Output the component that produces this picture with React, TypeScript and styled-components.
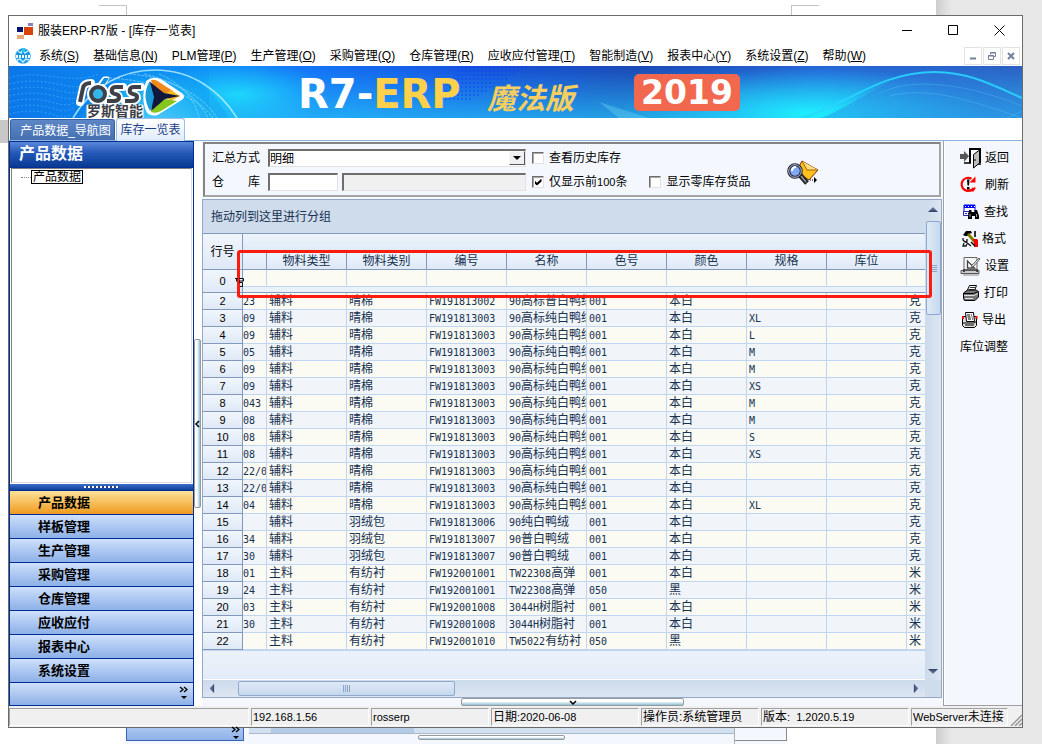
import React from "react";
import styled, { createGlobalStyle, css } from "styled-components";

const sans = `"Liberation Sans", "Noto Sans CJK SC", sans-serif`;

const GlobalStyle = createGlobalStyle`
  *, *::before, *::after { box-sizing: border-box; }
  body { margin: 0; font: 12px/16px ${sans}; color: #000; background: #fff; }
  button, input, select { font: inherit; color: inherit; margin: 0; }
  button { padding: 0; border: 0; background: none; cursor: pointer; }
`;

/* ---------- desktop ---------- */

const Desktop = styled.div`
  min-height: 100vh;
  display: grid;
  grid-template-columns: 8px minmax(0, 1fr) 19px;
  grid-template-rows: 15px 1fr 16px;
  overflow: hidden;
  background: linear-gradient(to left, #e8e8e8 90px, #cdcdcd 106px, #fff 106px);
`;

const PageMarks = styled.div`
  grid-column: 2;
  display: flex;
  justify-content: space-between;
  align-items: flex-end;
  padding: 0 204px 0 91px;
`;

const Mark = styled.span<{ $side: "left" | "right" }>`
  width: 28px;
  height: 10px;
  border-top: 1px solid #c4c4c4;
  ${(p) => (p.$side === "left" ? "border-right" : "border-left")}: 1px solid #c4c4c4;
`;

const Gutter = styled.div`
  grid-column: 1;
  padding-top: 105px;
  &::before { content: ""; display: block; height: 23px; background: #c8c8c8; }
`;

const Under = styled.div`
  grid-column: 2;
  display: flex;
  margin-left: 118px;
  width: 662px;
  border-right: 1px solid #fff;
  background: #f4f8fe;
`;

const UnderSide = styled.div`
  width: 118px;
  height: 13px;
  border: solid #3a62b4;
  border-width: 0 1px 1px;
  background: linear-gradient(#a9c6f2, #8fb1e6);
  display: flex;
  justify-content: flex-end;
  align-items: flex-end;
  padding-right: 3px;
`;

const UnderMain = styled.div`
  flex: 1;
  margin-left: 5px;
  display: flex;
  flex-direction: column;
  align-items: center;
  gap: 1px;
  border-right: 1px solid #b0b0b0;
`;

const UnderScroll = styled.div`
  width: 100%;
  height: 6px;
  border-bottom: 1px solid #a8b9d0;
  background: linear-gradient(90deg, #d3e0f0 22px, #b4cbe6 22px 165px, #d3e0f0 165px);
`;

const UnderRest = styled.div`
  width: 52px;
  height: 13px;
  border: solid #8a8a8a;
  border-width: 0 1px 1px 0;
`;

/* ---------- window frame ---------- */

const Frame = styled.div`
  grid-column: 2;
  display: flex;
  flex-direction: column;
  min-width: 0;
  border: 1px solid #6b6b6b;
  background: #fff;
`;

const TitleBar = styled.header`
  height: 29px;
  display: flex;
  align-items: center;
  padding: 0 0 0 8px;
  gap: 5px;
`;

const Title = styled.h1`
  flex: 1;
  margin: 0;
  font: 400 12px/16px ${sans};
`;

const WindowButtons = styled.div`
  display: flex;
`;

const WindowButton = styled.button`
  width: 46px;
  height: 28px;
  display: grid;
  place-items: center;
`;

const MenuBar = styled.nav`
  height: 21px;
  display: flex;
  align-items: center;
  padding: 0 2px 0 5px;
`;

const MenuItem = styled.button`
  margin-left: 7px;
  margin-right: 7px;
  white-space: nowrap;
`;

const MdiButtons = styled.div`
  margin-left: auto;
  display: flex;
  gap: 1px;
`;

const MdiButton = styled.button`
  width: 18px;
  height: 18px;
  border: 1px solid #e2e2e2;
  display: grid;
  place-items: center;
`;

/* ---------- banner ---------- */

const Banner = styled.div`
  position: relative;
  height: 52px;
  display: flex;
  align-items: center;
  overflow: hidden;
  padding-left: 60px;
`;

const BannerArt = styled.svg`
  position: absolute;
  inset: 0;
  width: 100%;
  height: 100%;
`;

const Logo = styled.svg`
  position: relative;
  flex: none;
`;

const Brand = styled.span`
  position: relative;
  margin-left: 101px;
  width: 189px;
  flex: none;
  font: 700 40px/48px "DejaVu Sans", sans-serif;
  color: #fff;
  padding-top: 4px;
  white-space: nowrap;
  b { color: #ffd04c; }
`;

const Edition = styled.span`
  position: relative;
  flex: none;
  width: 147px;
  font: italic 700 29px/44px "Noto Sans CJK SC", sans-serif;
  color: #f8cf5e;
  padding-top: 8px;
  white-space: nowrap;
`;

const Year = styled.span`
  position: relative;
  width: 106px;
  height: 37px;
  border-radius: 5px;
  background: #f2684f;
  color: #fff;
  text-align: center;
  font: 700 33px/38px "DejaVu Sans", sans-serif;
`;

/* ---------- document tabs ---------- */

const Tabs = styled.div`
  height: 23px;
  display: flex;
  align-items: flex-end;
  padding-left: 1px;
  border-bottom: 1px solid #8fb2de;
`;

const Tab = styled.button<{ $active?: boolean }>`
  border-radius: 3px 3px 0 0;
  white-space: nowrap;
  ${(p) =>
    p.$active
      ? css`
          width: 69px;
          height: 23px;
          margin-left: 1px;
          margin-bottom: -1px;
          border: 1px solid #9cbfe9;
          border-bottom: 0;
          background: linear-gradient(#fff, #dfebfb);
          color: #1b3f86;
        `
      : css`
          width: 105px;
          height: 21px;
          padding: 2px 0 0 6px;
          border: 1px solid #38609f;
          border-bottom: 0;
          background: linear-gradient(#5c86c6, #4470b2);
          color: #fff;
        `}
`;

const Body = styled.div`
  flex: 1;
  display: flex;
  min-height: 0;
`;

/* ---------- sidebar ---------- */

const Sidebar = styled.aside`
  width: 185px;
  flex: none;
  display: flex;
  flex-direction: column;
  border: 1px solid #002d96;
`;

const SideTitle = styled.h2`
  margin: 0;
  height: 26px;
  padding: 0 9px;
  font: 700 16px/24px ${sans};
  color: #fff;
  background: linear-gradient(#5a88d8, #2458b8 45%, #083a92);
  border-bottom: 1px solid #002d96;
`;

const Tree = styled.div`
  flex: 1;
  margin: 0 1px 1px;
  padding: 1px 0 0 9px;
  border: 1px solid #808080;
  border-right-color: #ddd;
  border-bottom-color: #ddd;
  display: flex;
  align-items: flex-start;
`;

const TreeStem = styled.span`
  width: 10px;
  margin-top: 7px;
  border-top: 1px dotted #888;
`;

const TreeNode = styled.button`
  height: 14px;
  padding: 0 1px;
  border: 1px solid #000;
  line-height: 12px;
`;

const Splitter = styled.div`
  height: 7px;
  display: flex;
  justify-content: center;
  background: linear-gradient(#3d6fc8, #0c3f9b);
  border-bottom: 1px solid #002d96;
  &::before {
    content: "";
    margin-top: 2px;
    width: 35px;
    height: 2px;
    background: repeating-linear-gradient(90deg, #fff 0 2px, #24427c 2px 4px);
  }
`;

const SideItem = styled.button<{ $active?: boolean }>`
  height: 24px;
  padding-left: 28px;
  text-align: left;
  font: 700 13px/22px ${sans};
  border-bottom: 1px solid #002d96;
  background: ${(p) =>
    p.$active ? "linear-gradient(#fbe19a, #f6bb55 55%, #ee9a1f)" : "linear-gradient(#cfe0fa, #adc8f2 50%, #8db0e6)"};
`;

const SideMore = styled.div`
  height: 22px;
  display: flex;
  justify-content: flex-end;
  padding: 3px 5px 0 0;
  background: linear-gradient(#cfe0fa, #8db0e6);
`;

const CollapseRail = styled.div`
  width: 8px;
  flex: none;
  display: flex;
  align-items: center;
`;

const CollapseThumb = styled.button`
  width: 7px;
  height: 169px;
  border: 1px solid #9a9a9a;
  border-radius: 2px;
  background: linear-gradient(90deg, #fff 40%, #8cc0d8);
  display: grid;
  place-items: center;
`;

/* ---------- main column ---------- */

const Main = styled.main`
  flex: 1;
  min-width: 0;
  display: flex;
  flex-direction: column;
  background: #f4f8fe;
`;

const Filters = styled.form`
  margin: 1px 2px 2px 1px;
  height: 55px;
  border: 2px solid #848484;
  border-right-color: #a5a5a5;
  border-bottom-color: #a5a5a5;
  padding: 5px 7px 0;
  display: flex;
`;

const FilterRows = styled.div`
  display: grid;
  grid-auto-rows: 18px;
  row-gap: 6px;
`;

const FilterRow = styled.div`
  display: flex;
  align-items: center;
  white-space: nowrap;
`;

const FieldLabel = styled.label`
  width: 48px;
  margin-right: 8px;
  display: flex;
  justify-content: space-between;
`;

const sunken = css`
  border: 2px solid #6e6e6e;
  border-right: 1px solid #e2e2e2;
  border-bottom: 1px solid #e2e2e2;
`;

const SelectBox = styled.div`
  position: relative;
  width: 258px;
  height: 18px;
`;

const Select = styled.select`
  appearance: none;
  display: block;
  width: 100%;
  height: 100%;
  padding: 0;
  border-radius: 0;
  background: #fff;
  line-height: 14px;
  ${sunken}
`;

const SelectArrow = styled.span`
  position: absolute;
  top: 2px;
  right: 1px;
  width: 16px;
  height: 14px;
  background: #f0f0f0;
  border: 1px solid #f8f8f8;
  border-right-color: #555;
  border-bottom-color: #555;
  pointer-events: none;
  display: grid;
  place-items: center;
  &::before {
    content: "";
    border: 4px solid transparent;
    border-top-color: #000;
    border-bottom: 0;
  }
`;

const TextInput = styled.input<{ $wide?: boolean }>`
  width: ${(p) => (p.$wide ? 184 : 70)}px;
  height: 18px;
  padding: 0 2px;
  margin-right: ${(p) => (p.$wide ? 0 : 4)}px;
  background: ${(p) => (p.$wide ? "#f0f0f0" : "#fff")};
  ${sunken}
`;

const Check = styled.label`
  display: flex;
  align-items: center;
  gap: 5px;
  margin-left: 6px;
  & + & { margin-left: 22px; }
`;

const CheckInput = styled.input`
  appearance: none;
  width: 12px;
  height: 12px;
  background: #fff;
  border: 1px solid #6e6e6e;
  border-right-color: #e2e2e2;
  border-bottom-color: #e2e2e2;
  box-shadow: inset 1px 1px #a8a8a8;
  display: grid;
  place-items: center;
  &:checked::after {
    content: "";
    width: 7px;
    height: 7px;
    background: #000;
    clip-path: polygon(0 28%, 36% 60%, 100% 0, 100% 42%, 36% 100%, 0 70%);
  }
`;

const SearchButton = styled.button`
  align-self: flex-start;
  margin: 11px 0 0 37px;
`;

/* ---------- data grid ---------- */

const GridBox = styled.section`
  flex: 1;
  min-height: 0;
  display: grid;
  grid-template-columns: minmax(0, 1fr) 16px;
  grid-template-rows: 1fr 17px;
  margin-right: 1px;
  border: 1px solid #94a8c6;
`;

const GridPane = styled.div`
  position: relative;
  display: flex;
  flex-direction: column;
  color: #16304f;
  border-bottom: 1px solid #fff;
  background: linear-gradient(#f1f5fc 90%, #eaf1fa 95%, #e2ecf8);
`;

const GroupBar = styled.div`
  height: 34px;
  padding: 0 8px;
  line-height: 35px;
  background: #cfdcec;
  border-bottom: 1px solid #8399bb;
`;

const Table = styled.table`
  width: 100%;
  table-layout: fixed;
  border-spacing: 0;
  border-bottom: 1px solid #bfd5f1;
`;

const cell = css`
  padding: 0;
  font-weight: 400;
  white-space: nowrap;
  overflow: hidden;
`;

const RowHead = styled.th<{ $h?: number }>`
  ${cell}
  height: ${(p) => p.$h ?? 17}px;
  color: #000;
  text-align: center;
  font-size: 11px;
  line-height: 14px;
  background: linear-gradient(#f0f6fd, #dfe9f6);
  border-right: 1px solid #8399bb;
  border-bottom: 1px solid #8399bb;
`;

const Corner = styled(RowHead)`
  font-size: 12px;
`;

const Band = styled.th`
  ${cell}
  height: 18px;
  background: linear-gradient(#edf4fc, #dfeaf7);
`;

const ColHead = styled.th`
  ${cell}
  height: 18px;
  line-height: 16px;
  text-align: center;
  background: linear-gradient(#edf4fc, #dfeaf7);
  border-right: 1px solid #8399bb;
  border-bottom: 1px solid #8399bb;
  &:last-child { border-right: 0; }
`;

const Row = styled.tr<{ $alt?: boolean }>`
  background: ${(p) => (p.$alt ? "#f1f5fa" : "#fbfbf3")};
`;

const Cell = styled.td`
  ${cell}
  height: 17px;
  padding-left: 2px;
  line-height: 14px;
  border-right: 1px solid #bfd5f1;
  border-bottom: 1px solid #bfd5f1;
  &:nth-child(2) { padding-left: 0; }
  &:last-child { border-right: 0; }
`;

const FilterGap = styled.td`
  ${cell}
  height: 6px;
  background: #e9f1fa;
  border-bottom: 1px solid #8399bb;
`;

const Ascii = styled.span`
  font-family: "DejaVu Sans Mono", monospace;
  font-size: 10px;
  line-height: 1;
`;

const Highlight = styled.div`
  position: absolute;
  top: 50px;
  left: 34px;
  right: -7px;
  height: 48px;
  border: 3px solid #fb1c10;
  border-radius: 3px;
  z-index: 1;
`;

const FilterMark = styled.svg`
  position: absolute;
  top: 78px;
  left: 32px;
  z-index: 2;
`;

const VScroll = styled.div`
  display: flex;
  flex-direction: column;
  align-items: center;
  padding: 7px 0 6px;
  background: linear-gradient(90deg, #ccdaea, #dce6f2);
`;

const VThumb = styled.div`
  width: 15px;
  height: 94px;
  margin: 9px 0 auto;
  border: 1px solid #8ea9cd;
  border-radius: 2px;
  background: linear-gradient(90deg, #dfe9f6, #c6d8ee);
  display: grid;
  place-items: center;
  &::before {
    content: "";
    width: 7px;
    height: 7px;
    background: repeating-linear-gradient(#8ba5c8 0 1px, transparent 1px 2px);
  }
`;

const HScroll = styled.div`
  display: flex;
  align-items: center;
  padding: 0 4px;
  background: linear-gradient(#ccdaea, #dce6f2);
`;

const HThumb = styled.div`
  width: 217px;
  height: 15px;
  margin: 0 auto 0 21px;
  border: 1px solid #8ea9cd;
  border-radius: 2px;
  background: linear-gradient(#dfe9f6, #c6d8ee);
  display: grid;
  place-items: center;
  &::before {
    content: "";
    width: 7px;
    height: 7px;
    background: repeating-linear-gradient(90deg, #8ba5c8 0 1px, transparent 1px 2px);
  }
`;

const ScrollCorner = styled.div`
  background: #cfdcec;
`;

const rotate = { up: 0, right: 90, down: 180, left: 270 };

const Arrow = styled.button<{ $dir: keyof typeof rotate }>`
  width: 10px;
  height: 5px;
  flex: none;
  background: linear-gradient(#7a88ac, #2f3f66);
  clip-path: polygon(50% 0, 100% 100%, 0 100%);
  transform: rotate(${(p) => rotate[p.$dir]}deg);
`;

const BottomRail = styled.div`
  height: 8px;
  display: flex;
  justify-content: center;
`;

const BottomThumb = styled.button<{ $small?: boolean }>`
  width: ${(p) => (p.$small ? 147 : 223)}px;
  height: ${(p) => (p.$small ? 5 : 8)}px;
  border: 1px solid #9a9a9a;
  border-radius: 2px;
  background: linear-gradient(#fff 40%, #8cc0d8);
  display: grid;
  place-items: center;
`;

/* ---------- right tool column ---------- */

const Tools = styled.aside`
  width: 79px;
  flex: none;
  display: flex;
  flex-direction: column;
  padding: 3px 0 0 16px;
  border-left: 1px solid #a0a0a0;
  border-bottom: 1px solid #a0a0a0;
  box-shadow: inset 1px 0 #fff;
  background: #f4f8fe;
`;

const Tool = styled.button`
  height: 27px;
  display: flex;
  align-items: center;
  gap: 4px;
  white-space: nowrap;
  svg { flex: none; }
`;

/* ---------- status bar ---------- */

const StatusBar = styled.footer`
  height: 21px;
  display: flex;
  gap: 2px;
  padding: 2px 0 1px;
  background: #f0f0f0;
`;

const Status = styled.span<{ $w?: number }>`
  ${(p) => (p.$w ? `width: ${p.$w}px; flex: none;` : "flex: 1;")}
  padding-left: 1px;
  border: 1px solid #a0a0a0;
  border-right-color: #fff;
  border-bottom-color: #fff;
  line-height: 17px;
  white-space: pre;
  overflow: hidden;
`;

const Small = styled.span`
  font-size: 11px;
`;

/* ---------- data ---------- */

const menus: [string, string][] = [
  ["系统", "S"], ["基础信息", "N"], ["PLM管理", "P"], ["生产管理", "O"], ["采购管理", "Q"], ["仓库管理", "R"],
  ["应收应付管理", "T"], ["智能制造", "V"], ["报表中心", "Y"], ["系统设置", "Z"], ["帮助", "W"],
];

const sections = ["产品数据", "样板管理", "生产管理", "采购管理", "仓库管理", "应收应付", "报表中心", "系统设置"];

const columns = ["", "物料类型", "物料类别", "编号", "名称", "色号", "颜色", "规格", "库位", ""];

const pure = "90高标纯白鸭绒";
const rows: string[][] = [
  ["23", "辅料", "晴棉", "FW191813002", "90高标普白鸭绒", "001", "本白", "", "", "克"],
  ["09", "辅料", "晴棉", "FW191813003", pure, "001", "本白", "XL", "", "克"],
  ["09", "辅料", "晴棉", "FW191813003", pure, "001", "本白", "L", "", "克"],
  ["05", "辅料", "晴棉", "FW191813003", pure, "001", "本白", "M", "", "克"],
  ["09", "辅料", "晴棉", "FW191813003", pure, "001", "本白", "M", "", "克"],
  ["09", "辅料", "晴棉", "FW191813003", pure, "001", "本白", "XS", "", "克"],
  ["043", "辅料", "晴棉", "FW191813003", pure, "001", "本白", "M", "", "克"],
  ["08", "辅料", "晴棉", "FW191813003", pure, "001", "本白", "M", "", "克"],
  ["08", "辅料", "晴棉", "FW191813003", pure, "001", "本白", "S", "", "克"],
  ["08", "辅料", "晴棉", "FW191813003", pure, "001", "本白", "XS", "", "克"],
  ["22/0", "辅料", "晴棉", "FW191813003", pure, "001", "本白", "", "", "克"],
  ["22/0", "辅料", "晴棉", "FW191813003", pure, "001", "本白", "", "", "克"],
  ["04", "辅料", "晴棉", "FW191813003", pure, "001", "本白", "XL", "", "克"],
  ["", "辅料", "羽绒包", "FW191813006", "90纯白鸭绒", "001", "本白", "", "", "克"],
  ["34", "辅料", "羽绒包", "FW191813007", "90普白鸭绒", "001", "本白", "", "", "克"],
  ["30", "辅料", "羽绒包", "FW191813007", "90普白鸭绒", "001", "本白", "", "", "克"],
  ["01", "主料", "有纺衬", "FW192001001", "TW22308高弹", "001", "本白", "", "", "米"],
  ["24", "主料", "有纺衬", "FW192001001", "TW22308高弹", "050", "黑", "", "", "米"],
  ["03", "主料", "有纺衬", "FW192001008", "3044H树脂衬", "001", "本白", "", "", "米"],
  ["30", "主料", "有纺衬", "FW192001008", "3044H树脂衬", "001", "本白", "", "", "米"],
  ["", "主料", "有纺衬", "FW192001010", "TW5022有纺衬", "050", "黑", "", "", "米"],
];

/* Latin runs are set in a narrower face than the Chinese around them. */
function Mixed({ text, as: As = Ascii }: { text: string; as?: React.ElementType }) {
  return (
    <>
      {text.split(/([ -~]+)/).map((part, i) => (i % 2 ? <As key={i}>{part}</As> : part))}
    </>
  );
}

/* ---------- icons ---------- */

const Glyph = ({ w = 20, h = 20, children }: { w?: number; h?: number; children: React.ReactNode }) => (
  <svg width={w} height={h} viewBox={`0 0 ${w} ${h}`} aria-hidden="true">{children}</svg>
);

const DoorIcon = () => (
  <Glyph w={21} h={22}>
    <path d="M0 7h4V4l5 5-5 6v-3H0z" fill="#555" />
    <path d="M10 16V2h10v14" fill="#fff" stroke="#000" strokeWidth="2" />
    <path d="M4 16h7M17 17h4" stroke="#000" strokeWidth="1.5" />
    <path d="M13.500 7.500l6-4.500v13l-6 5z" fill="#bdbdbd" stroke="#000" />
    <path d="M15 12v2" stroke="#000" />
  </Glyph>
);

const RefreshIcon = () => (
  <Glyph w={21}>
    <path d="M11.500 3.800A6.500 6.500 0 1 0 13.500 13" fill="none" stroke="#f00" strokeWidth="2.200" />
    <path d="M9.500 7.500h6v-6z" fill="#f00" />
    <path d="M9 15.500h4l2-3" fill="none" stroke="#f00" strokeWidth="2" />
    <path d="M7 4.500h2.500l-.5 6H7.500zM7 12h2.500v2.500H7z" fill="#000" />
  </Glyph>
);

const FindIcon = () => (
  <Glyph>
    <path d="M4 3h11v9H4z" fill="#fff" stroke="#00f" />
    <path d="M4 3h11v3H4z" fill="#00f" />
    <path d="M5 4.500h10" stroke="#fff" strokeDasharray="1 2" />
    <path d="M3.500 9.500h7v4h-7z" fill="#fff" stroke="#22b" />
    <path d="M5 11.500h5" stroke="#22b" strokeDasharray="2 1" />
    <path d="M9 8h2.500v2h3V8H17l2 6v3h-4v-3h-3v3H8v-3z" fill="#000" />
    <path d="M10 12v3M16.500 12v3" stroke="#ccc" strokeWidth=".8" />
  </Glyph>
);

const FormatIcon = () => (
  <Glyph w={18}>
    <path d="M3 6l3-4h5l1 2-3 1-1 2H5z" fill="#000" />
    <path d="M8 5l7 8" stroke="#808000" strokeWidth="3" />
    <path d="M14.500 2v6M15.500 2v6" stroke="#333" />
    <path d="M13 10h4l1 1v7h-4v-5z" fill="#f00" />
    <path d="M3 9v2l2 2 2-1v-2M6 13l5 4M4 14l-1 3h3l1-2" fill="none" stroke="#111" strokeWidth="1.300" />
    <path d="M11 13l4 4" stroke="#000" strokeWidth="1.500" />
  </Glyph>
);

const SetupIcon = () => (
  <Glyph w={21} h={20}>
    <path d="M4 1.500h13v12H4z" fill="#f5f5f5" stroke="#666" />
    <path d="M7.500 5v7h7z" fill="#fff" stroke="#444" strokeWidth="1.300" />
    <path d="M11 10l8-8 1 1-7 8z" fill="#ddd" stroke="#444" strokeWidth=".8" />
    <path d="M1 14.500h18v3H1z" fill="#ccc" stroke="#555" />
    <path d="M3 19h16" stroke="#888" />
    <path d="M4 13v3M17 13v3" stroke="#444" strokeWidth="2" />
  </Glyph>
);

const PrintIcon = () => (
  <Glyph>
    <path d="M7 8l2.500-5.500h7L14 9z" fill="#fff" stroke="#000" />
    <path d="M10 4.500h5M9 6.500h5" stroke="#000" strokeWidth=".8" />
    <path d="M3.500 10l4-3h9l2 2v5l-3.500 3.500H4.500l-1-2z" fill="#777" stroke="#000" />
    <path d="M3.500 10.500h10l5-2" fill="none" stroke="#000" />
    <path d="M4 12.500h10l4-2" fill="none" stroke="#ddd" />
    <path d="M5 15.500h8" stroke="#ddd" />
  </Glyph>
);

const ExportIcon = () => (
  <Glyph w={18}>
    <path d="M2.500 6.500h14v9l-2 2h-10l-2-2z" fill="#ddd" stroke="#000" />
    <path d="M5.500 2.500h8l1 9h-8z" fill="#fff" stroke="#000" />
    <path d="M7 5h5M7.500 7h5M8 9h5" stroke="#000" strokeDasharray="3 1" />
    <path d="M2 6h2v3H2zM15.500 6h2v3h-2z" fill="#f00" />
    <path d="M3 13h11l3-2M5 15h9" fill="none" stroke="#000" />
  </Glyph>
);

const SearchMailIcon = () => (
  <Glyph w={33} h={26}>
    <path d="M15 1l16 9-9 10-13-8z" fill="#ffc21c" stroke="#7c2c12" />
    <path d="M15 1l5 9 11 0" fill="#ffe27a" stroke="#a85a10" />
    <path d="M13 15l7 8" stroke="#222" strokeWidth="5" />
    <path d="M14 16l5 6" stroke="#999" strokeWidth="1.500" />
    <circle cx="8" cy="11" r="6.300" fill="#7fa9f5" stroke="#223" strokeWidth="3" />
    <circle cx="8" cy="11" r="6.300" fill="none" stroke="#b9c4dd" strokeWidth="1" />
    <path d="M5 11c0-3 2-4 4-4" stroke="#fff" strokeWidth="2" fill="none" />
    <path d="M23 20h5" stroke="#000" strokeDasharray="1 1" />
    <path d="M27 17l3 3-3 3z" fill="#000" />
  </Glyph>
);

const AppIcon = () => (
  <Glyph w={16} h={16}>
    <path d="M0 4h6v5H0z" fill="#04146c" />
    <path d="M11 0h5v3h-5z" fill="#8a80bc" />
    <path d="M7 4h9v8H7z" fill="#d84408" />
    <path d="M0 12h7v4H0z" fill="#eaa878" />
  </Glyph>
);

const GlobeIcon = () => (
  <Glyph w={18} h={18}>
    <circle cx="9" cy="9" r="7.500" fill="#1593e6" stroke="#67bdf2" strokeDasharray="2 1" />
    <path d="M4 4l3 2 2-3 2 3 3-2M3 13l3-1 3 3 3-3 3 1" stroke="#c9f4ff" fill="none" strokeWidth="1.500" />
    <path d="M2 9.500h14" stroke="#e9f8ff" strokeWidth="3" strokeDasharray="2 1" />
    <path d="M8 1h3v4H8z" fill="#29c8e8" />
  </Glyph>
);

const Chevron = ({ d, w, h }: { d: string; w: number; h: number }) => (
  <Glyph w={w} h={h}><path d={d} fill="none" stroke="#000" strokeWidth="1.500" /></Glyph>
);

const MoreIcon = () => (
  <Glyph w={9} h={14}>
    <path d="M1 1l3 2.500L1 6M5 1l3 2.500L5 6" fill="none" stroke="#000" strokeWidth="1.300" />
    <path d="M2 10h6l-3 3z" fill="#000" />
  </Glyph>
);

const tools: [string, React.ReactNode][] = [
  ["返回", <DoorIcon />], ["刷新", <RefreshIcon />], ["查找", <FindIcon />], ["格式", <FormatIcon />],
  ["设置", <SetupIcon />], ["打印", <PrintIcon />], ["导出", <ExportIcon />], ["库位调整", null],
];

const BannerBackground = () => (
  <BannerArt viewBox="0 0 1013 52" preserveAspectRatio="none" aria-hidden="true">
    <defs>
      <linearGradient id="sky">
        <stop offset="0" stopColor="#0b78ea" />
        <stop offset=".18" stopColor="#0f8df4" />
        <stop offset=".3" stopColor="#1372f6" />
        <stop offset=".45" stopColor="#1450e0" />
        <stop offset=".62" stopColor="#1c48b4" />
        <stop offset=".8" stopColor="#2466d6" />
        <stop offset="1" stopColor="#2c60c4" />
      </linearGradient>
      <linearGradient id="glow" x2="0" y2="1">
        <stop offset="0" stopColor="#28c8f8" stopOpacity="0" />
        <stop offset="1" stopColor="#28c8f8" stopOpacity=".85" />
      </linearGradient>
      <radialGradient id="cyan">
        <stop offset="0" stopColor="#1ef0ff" />
        <stop offset="1" stopColor="#1ecfff" stopOpacity="0" />
      </radialGradient>
      <radialGradient id="globe">
        <stop offset="0" stopColor="#7fe6ff" />
        <stop offset=".8" stopColor="#1cb4f4" stopOpacity=".8" />
        <stop offset="1" stopColor="#0f96f0" stopOpacity=".3" />
      </radialGradient>
      <pattern id="dots" width="4" height="4" patternUnits="userSpaceOnUse">
        <path d="M0 0h2v2H0z" fill="#0a32ff" opacity=".35" />
      </pattern>
    </defs>
    <path d="M0 0h1013v52H0z" fill="url(#sky)" />
    <path d="M200 0h813v52H200z" fill="url(#glow)" opacity=".8" />
    <ellipse cx="230" cy="28" rx="90" ry="34" fill="url(#cyan)" opacity=".7" />
    <ellipse cx="800" cy="48" rx="190" ry="46" fill="url(#cyan)" />
    <path d="M450 0h70l-60 36h-30z" fill="url(#dots)" />
    <g stroke="#5fc6ff" strokeWidth="1" fill="none" opacity=".45" strokeDasharray="2 2">
      <path d="M0 12C30 2 60 20 90 8M0 18c40-10 60 10 84 0M0 24c40-10 60 10 76 0M0 30c40-10 60 10 70 0M0 36c40-10 50 10 66 0M0 42c40-10 50 10 64 0M0 48c40-10 50 10 62 0" />
    </g>
    <circle cx="145" cy="86" r="82" fill="url(#globe)" />
    <path d="M64 52C84 18 116 4 146 4c38 0 66 22 82 48" fill="none" stroke="#b9f2ff" strokeWidth="1.500" opacity=".8" />
    <g stroke="#c6f4ff" fill="none" opacity=".45" strokeDasharray="3 1">
      <path d="M120 8c36 2 74 20 88 44M135 8c28 6 52 20 64 44M150 8c20 8 36 24 40 44M100 12c40 2 88 16 104 40" />
    </g>
    <path d="M812 52C850 38 880 6 926 6c34 0 60 14 87 26v20z" fill="#2d78dc" opacity=".35" />
    <path d="M792 52C840 38 870 6 926 6c34 0 60 14 87 26" fill="none" stroke="#29d4ff" strokeWidth="2" opacity=".9" />
    <path d="M870 28c30-18 90-10 143 12M880 30c40-10 80 4 133 22M998 52l15-7" fill="none" stroke="#5fd0f4" opacity=".3" />
    <path d="M590 36l50 16h-30z" fill="#7ee4f8" opacity=".3" />
  </BannerArt>
);

const letters = "M80 102l3-14q1-5 8-5M123 87h-7c-5 0-6 6-1 7 6 1 5 7-1 7h-7M141 87h-7c-5 0-6 6-1 7 6 1 5 7-1 7h-7";

const RossLogo = () => (
  <Logo width="128" height="52" viewBox="69 66 128 52" role="img" aria-label="ross 罗斯智能">
    <g fill="none" stroke="#fff" strokeLinecap="round" strokeLinejoin="round">
      <path d={letters} strokeWidth="8" />
      <path d="M100 83l4-5h4l-3 5z" strokeWidth="3" />
      <circle cx="98" cy="94" r="7" strokeWidth="8" />
      <path d="M88 106h54v14H88z" fill="#fff" strokeWidth="3" />
      <path d="M148 82q5-4 12-1l21 14q2 2 0 3l-24 15q-8 2-10-5-4-12 1-26z" fill="#fff" strokeWidth="4" />
    </g>
    <circle cx="98" cy="94" r="7" fill="#35b6e8" stroke="#3e4148" strokeWidth="4" />
    <path d={letters} fill="none" stroke="#3e4148" strokeWidth="4" />
    <path d="M100 84l4-6h5l-4 6z" fill="#1290d8" />
    <path d="M150 81q-9 14 0 30l5-9V90z" fill="#1a9cd8" />
    <path d="M151 80q4-1 8 2l14 9-9 3-11-6z" fill="#f08a1c" />
    <path d="M171 90l9 6-9 5-7-6z" fill="#f8b820" />
    <path d="M151 112q5 2 10-1l16-10-12-2-10 6z" fill="#86c51c" />
    <path d="M150 82l14 11 16 3-15 3-14 12 3-14z" fill="#10183c" />
    <text x="87" y="116" fontFamily="Noto Sans CJK SC, sans-serif" fontWeight="700" fontSize="14" fill="#3e4148">罗斯智能</text>
  </Logo>
);

/* ---------- page ---------- */

export default function App() {
  return (
    <Desktop>
      <GlobalStyle />
      <PageMarks aria-hidden="true">
        <Mark $side="left" />
        <Mark $side="right" />
      </PageMarks>
      <Gutter />
      <Frame>
        <TitleBar>
          <AppIcon />
          <Title>服装ERP-R7版 - [库存一览表]</Title>
          <WindowButtons>
            <WindowButton aria-label="最小化"><Glyph w={11} h={11}><path d="M0 5.500h10" stroke="#000" /></Glyph></WindowButton>
            <WindowButton aria-label="最大化"><Glyph w={11} h={11}><path d="M.5.500h9v9h-9z" fill="none" stroke="#000" /></Glyph></WindowButton>
            <WindowButton aria-label="关闭"><Glyph w={11} h={11}><path d="M.5.500l10 10M10.500.500l-10 10" stroke="#000" /></Glyph></WindowButton>
          </WindowButtons>
        </TitleBar>
        <MenuBar>
          <GlobeIcon />
          {menus.map(([name, key]) => (
            <MenuItem key={key}>{name}(<u>{key}</u>)</MenuItem>
          ))}
          <MdiButtons>
            <MdiButton aria-label="最小化子窗口"><Glyph w={8} h={8}><path d="M1 6.500h6" stroke="#72809a" strokeWidth="2" /></Glyph></MdiButton>
            <MdiButton aria-label="还原子窗口"><Glyph w={8} h={8}><path d="M2.500 2.500V.5h5v4h-2M.5 3.500h5v4h-5zM2 1h6M0 4h6" fill="none" stroke="#72809a" /></Glyph></MdiButton>
            <MdiButton aria-label="关闭子窗口"><Glyph w={8} h={8}><path d="M1 1l6 6M7 1L1 7" stroke="#72809a" strokeWidth="2" /></Glyph></MdiButton>
          </MdiButtons>
        </MenuBar>
        <Banner>
          <BannerBackground />
          <RossLogo />
          <Brand>R7-<b>ERP</b></Brand>
          <Edition>魔法版</Edition>
          <Year>2019</Year>
        </Banner>
        <Tabs>
          <Tab>产品数据_导航图</Tab>
          <Tab $active>库存一览表</Tab>
        </Tabs>
        <Body>
          <Sidebar>
            <SideTitle>产品数据</SideTitle>
            <Tree>
              <TreeStem />
              <TreeNode>产品数据</TreeNode>
            </Tree>
            <Splitter />
            {sections.map((name, i) => (
              <SideItem key={name} $active={i === 0}>{name}</SideItem>
            ))}
            <SideMore><MoreIcon /></SideMore>
          </Sidebar>
          <CollapseRail>
            <CollapseThumb aria-label="收起侧栏"><Chevron w={5} h={8} d="M4 1L1 4l3 3" /></CollapseThumb>
          </CollapseRail>
          <Main>
            <Filters>
              <FilterRows>
                <FilterRow>
                  <FieldLabel htmlFor="mode">汇总方式</FieldLabel>
                  <SelectBox>
                    <Select id="mode"><option>明细</option></Select>
                    <SelectArrow />
                  </SelectBox>
                  <Check><CheckInput type="checkbox" />查看历史库存</Check>
                </FilterRow>
                <FilterRow>
                  <FieldLabel htmlFor="store"><span>仓</span><span>库</span></FieldLabel>
                  <TextInput id="store" />
                  <TextInput $wide disabled aria-label="仓库名称" />
                  <Check><CheckInput type="checkbox" defaultChecked /><span>仅显示前<Small>100</Small>条</span></Check>
                  <Check><CheckInput type="checkbox" />显示零库存货品</Check>
                </FilterRow>
              </FilterRows>
              <SearchButton type="button" aria-label="查询"><SearchMailIcon /></SearchButton>
            </Filters>
            <GridBox>
              <GridPane>
                <GroupBar>拖动列到这里进行分组</GroupBar>
                <Table>
                  <colgroup>
                    <col style={{ width: 40 }} />
                    {columns.map((_, i) => (
                      <col key={i} style={{ width: i === 0 ? 24 : i === 9 ? undefined : 80 }} />
                    ))}
                  </colgroup>
                  <thead>
                    <tr><Corner rowSpan={2} $h={36}>行号</Corner><Band colSpan={10} /></tr>
                    <tr>{columns.map((c, i) => <ColHead key={i}>{c}</ColHead>)}</tr>
                  </thead>
                  <tbody>
                    <Row>
                      <RowHead rowSpan={2} $h={23}>0</RowHead>
                      {columns.map((_, i) => <Cell key={i} />)}
                    </Row>
                    <tr><FilterGap colSpan={10} /></tr>
                    {rows.map((r, n) => (
                      <Row key={n} $alt={n % 2 === 1}>
                        <RowHead>{n + 2}</RowHead>
                        {r.map((v, i) => <Cell key={i}><Mixed text={v} /></Cell>)}
                      </Row>
                    ))}
                  </tbody>
                </Table>
                <FilterMark width="9" height="9" viewBox="0 0 9 9" aria-hidden="true">
                  <path d="M0 .5h3M1.500 1v2.500M4 .5h4.500v2.500H4M4 4.500h3.500v4H5" fill="none" stroke="#111" />
                </FilterMark>
                <Highlight />
              </GridPane>
              <VScroll>
                <Arrow $dir="up" aria-label="向上滚动" />
                <VThumb />
                <Arrow $dir="down" aria-label="向下滚动" />
              </VScroll>
              <HScroll>
                <Arrow $dir="left" aria-label="向左滚动" />
                <HThumb />
                <Arrow $dir="right" aria-label="向右滚动" />
              </HScroll>
              <ScrollCorner />
            </GridBox>
            <BottomRail>
              <BottomThumb aria-label="展开底栏"><Chevron w={8} h={5} d="M1 1l3 3 3-3" /></BottomThumb>
            </BottomRail>
          </Main>
          <Tools>
            {tools.map(([name, icon]) => (
              <Tool key={name}>{icon}{name}</Tool>
            ))}
          </Tools>
        </Body>
        <StatusBar>
          <Status $w={240} />
          <Status $w={118}><Small>192.168.1.56</Small></Status>
          <Status $w={118}><Small>rosserp</Small></Status>
          <Status $w={148}><Mixed as={Small} text="日期:2020-06-08" /></Status>
          <Status $w={118}>操作员:系统管理员</Status>
          <Status $w={148}><Mixed as={Small} text="版本:  1.2020.5.19" /></Status>
          <Status><Mixed as={Small} text="WebServer未连接" /></Status>
          <Glyph w={12} h={18}><path d="M1 18L12 7M5 18l7-7M9 18l3-3" stroke="#999" strokeWidth="1.500" /></Glyph>
        </StatusBar>
      </Frame>
      <Under aria-hidden="true">
        <UnderSide><MoreIcon /></UnderSide>
        <UnderMain>
          <UnderScroll />
          <BottomThumb as="span" $small />
        </UnderMain>
        <UnderRest />
      </Under>
    </Desktop>
  );
}
